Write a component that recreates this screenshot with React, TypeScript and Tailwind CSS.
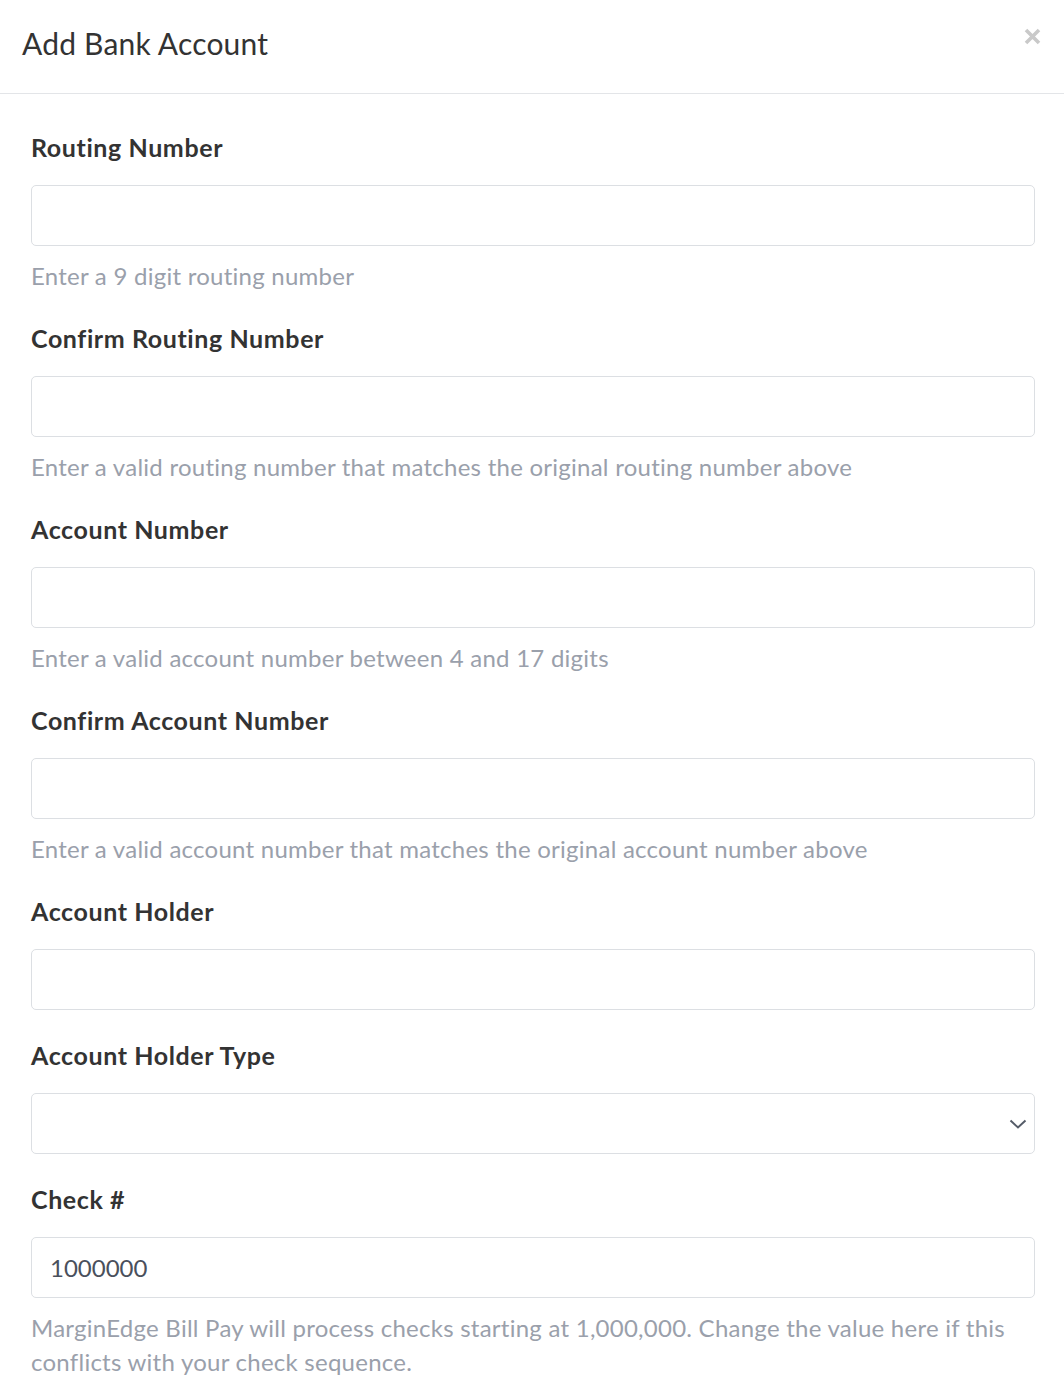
interface FieldProps {
  label: string;
  value?: string;
  help?: string[];
  select?: boolean;
}

function Field({ label, value, help, select }: FieldProps) {
  return (
    <div className="mb-[30px]">
      <label className="block h-[30px] text-[25px] font-bold leading-[30px] tracking-[0.6px] text-[#333333]">
        {label}
      </label>
      <div className="relative mt-[23px] flex h-[61px] items-center rounded-[5px] border border-[#dcdfe3] bg-white px-[18px]">
        {value && <span className="text-[24px] text-[#4a505c]">{value}</span>}
        {select && (
          <svg
            className="absolute right-[7px] top-[21px] h-[18px] w-[18px] text-[#555c68]"
            viewBox="0 0 18 18"
            fill="none"
            stroke="currentColor"
            strokeWidth="2"
          >
            <path d="M1.5 5.5 9 12.5 16.5 5.5" />
          </svg>
        )}
      </div>
      {help && (
        <div className="mt-[13px] text-[24px] leading-[34px] tracking-[0.25px] text-[#9aa0ab]">
          {help.map((line, i) => (
            <p key={i}>{line}</p>
          ))}
        </div>
      )}
    </div>
  );
}

export default function App() {
  return (
    <div className="min-h-[1396px] w-[1064px] bg-white font-['Lato',sans-serif]">
      <div className="flex h-[94px] items-start justify-between border-b border-[#e3e5e8] pl-[22px] pr-[23px]">
        <h2 className="mt-[23px] text-[30px] leading-[40px] tracking-[0.2px] text-[#333333]">Add Bank Account</h2>
        {/* close button */}
        <svg className="mt-[28px] h-[17px] w-[17px] text-[#c9c9c9]" viewBox="0 0 17 17" fill="none" stroke="currentColor" strokeWidth="3.6">
          <path d="M2 2 15 15M15 2 2 15" />
        </svg>
      </div>
      <div className="px-[31px] pb-[30px] pr-[29px] pt-[38px]">
        <Field label="Routing Number" help={['Enter a 9 digit routing number']} />
        <Field
          label="Confirm Routing Number"
          help={['Enter a valid routing number that matches the original routing number above']}
        />
        <Field label="Account Number" help={['Enter a valid account number between 4 and 17 digits']} />
        <Field
          label="Confirm Account Number"
          help={['Enter a valid account number that matches the original account number above']}
        />
        <Field label="Account Holder" />
        <Field label="Account Holder Type" select />
        <Field
          label="Check #"
          value="1000000"
          help={[
            'MarginEdge Bill Pay will process checks starting at 1,000,000. Change the value here if this',
            'conflicts with your check sequence.',
          ]}
        />
      </div>
    </div>
  );
}
